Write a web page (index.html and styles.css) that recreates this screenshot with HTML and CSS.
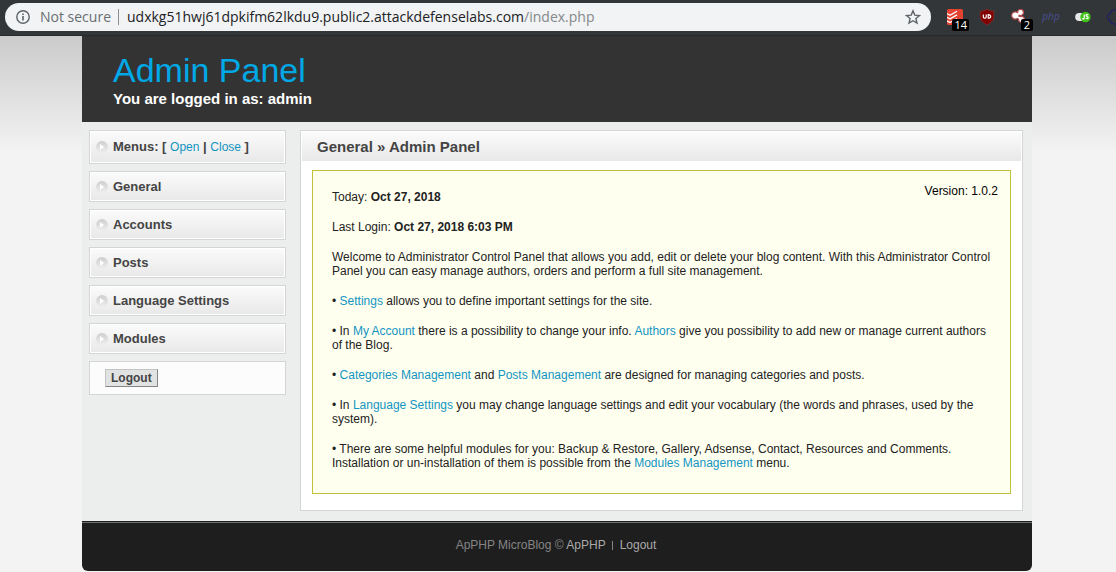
FILE: index.html
```html
<!DOCTYPE html>
<html lang="en">
<head>
<meta charset="utf-8">
<title>Admin Panel</title>
<link rel="stylesheet" href="styles.css">
</head>
<body>
<div class="toolbar">
  <div class="omnibox">
    <svg class="info" viewBox="0 0 14 14" width="14" height="14" aria-hidden="true"><circle cx="7" cy="7" r="6.2" fill="none" stroke="#5f6368" stroke-width="1.4"/><path d="M6.2 3.4h1.6V5H6.2zM6.2 6.1h1.6v4.5H6.2z" fill="#5f6368"/></svg>
    <span class="security">Not secure</span>
    <span class="address">udxkg51hwj61dpkifm62lkdu9.public2.attackdefenselabs.com<span class="path">/index.php</span></span>
    <svg class="star" viewBox="0 0 16 16" width="16" height="16" aria-hidden="true"><path d="M8 1.8l1.8 4.3 4.7.4-3.6 3 1.1 4.6L8 11.7l-4 2.4 1.1-4.6-3.6-3 4.7-.4z" fill="none" stroke="#5f6368" stroke-width="1.4"/></svg>
  </div>
  <div class="extensions">
    <span class="ext">
      <svg viewBox="0 0 16 16" width="16" height="16" aria-hidden="true"><rect width="16" height="16" rx="1.5" fill="#e44332"/><path d="M0 4.5l3 1.7 7-4M0 8.2l3 1.7 7-4M0 11.9l3 1.7 7-4" fill="none" stroke="#fff" stroke-width="1.3"/></svg>
      <span class="badge">14</span>
    </span>
    <span class="ext">
      <svg viewBox="0 0 16 16" width="16" height="16" aria-hidden="true"><path d="M8 .3c2 1.400 4.300 1.900 6.700 2v5.500c0 3.800-3 6-6.700 7.900-3.700-1.900-6.700-4.100-6.700-7.900V2.300C3.700 2.200 6 1.700 8 .3z" fill="#800000" stroke="#a33" stroke-width=".5"/><path d="M4.300 5.500v2.300c0 1.900 2.900 1.900 2.900 0V5.500M9.200 5.600v3.600c3.300.2 3.300-3.600 0-3.600z" fill="none" stroke="#fff" stroke-width="1.2"/></svg>
    </span>
    <span class="ext">
      <svg viewBox="0 0 16 16" width="16" height="16" aria-hidden="true"><g fill="#fff" stroke="#b94a4a" stroke-width="1.200"><circle cx="9.500" cy="3.500" r="3"/><circle cx="4.300" cy="6.500" r="3.600"/><circle cx="10.500" cy="10.500" r="3"/></g><path d="M6 6l3-2M7 8l3 2" stroke="#fff" stroke-width="2"/></svg>
      <span class="badge">2</span>
    </span>
    <span class="ext php">php</span>
    <span class="ext">
      <svg viewBox="0 0 16 16" width="16" height="16" aria-hidden="true"><rect x=".2" y="4" width="13" height="8" rx="4" fill="#e8e8e8"/><circle cx="10.500" cy="8" r="5.200" fill="#3fc218"/><path d="M9.200 5.500v3.600c0 1.300-1.800 1.200-1.800.2M13.300 6.100c-.8-.8-2.400-.5-2.200.6.200 1.100 2.200.7 2.200 1.900 0 1.300-1.800 1.400-2.500.5" fill="none" stroke="#fff" stroke-width="1.200"/></svg>
    </span>
    <span class="ext">
      <svg viewBox="0 0 16 16" width="16" height="16" aria-hidden="true"><path d="M4.500 1.500h3V.5h3v1h4v13h-4v1h-3v-1h-3v-2h-2V10h-2V6h2V3.500h2z" fill="none" stroke="#20235e" stroke-width="1.200"/></svg>
    </span>
  </div>
</div>
<div class="page">
  <div class="wrapper">
    <header class="header">
      <h1>Admin Panel</h1>
      <p>You are logged in as: admin</p>
    </header>
    <div class="columns">
      <nav class="sidebar">
        <div class="menu tall"><i class="bullet"></i><span>Menus: [ <a href="#open">Open</a> | <a href="#close">Close</a> ]</span></div>
        <div class="menu"><i class="bullet"></i><span>General</span></div>
        <div class="menu"><i class="bullet"></i><span>Accounts</span></div>
        <div class="menu"><i class="bullet"></i><span>Posts</span></div>
        <div class="menu"><i class="bullet"></i><span>Language Settings</span></div>
        <div class="menu"><i class="bullet"></i><span>Modules</span></div>
        <form class="logout"><button type="button">Logout</button></form>
      </nav>
      <main class="content">
        <h2>General » Admin Panel</h2>
        <div class="notice">
          <div class="version">Version: 1.0.2</div>
          <p class="today">Today: <b>Oct 27, 2018</b></p>
          <p>Last Login: <b>Oct 27, 2018 6:03 PM</b></p>
          <p>Welcome to Administrator Control Panel that allows you add, edit or delete your blog content. With this Administrator Control Panel you can easy manage authors, orders and perform a full site management.</p>
          <p>• <a href="#settings">Settings</a> allows you to define important settings for the site.</p>
          <p>• In <a href="#account">My Account</a> there is a possibility to change your info. <a href="#authors">Authors</a> give you possibility to add new or manage current authors of the Blog.</p>
          <p>• <a href="#categories">Categories Management</a> and <a href="#posts">Posts Management</a> are designed for managing categories and posts.</p>
          <p>• In <a href="#language">Language Settings</a> you may change language settings and edit your vocabulary (the words and phrases, used by the system).</p>
          <p>• There are some helpful modules for you: Backup &amp; Restore, Gallery, Adsense, Contact, Resources and Comments. Installation or un-installation of them is possible from the <a href="#modules">Modules Management</a> menu.</p>
        </div>
      </main>
    </div>
    <footer class="footer">
      <span>ApPHP MicroBlog © <a href="#apphp">ApPHP</a></span>
      <a class="exit" href="#logout">Logout</a>
    </footer>
  </div>
</div>
</body>
</html>
```

FILE: styles.css
```css
* { box-sizing: border-box; }
body {
  margin: 0;
  background: #f3f3f3;
  color: #222;
  font: 12px/14px "Liberation Sans", Arial, sans-serif;
  overflow-x: hidden;
}
a { color: #1295c2; text-decoration: none; }
h1, h2, p { margin: 0; }

.toolbar {
  display: flex;
  align-items: flex-start;
  height: 36px;
  padding: 3px 0 0 5px;
  background: #323639;
  border-bottom: 1px solid #28292a;
  overflow: hidden;
  font-family: "Open Sans", "Noto Sans", sans-serif;
}
.omnibox {
  flex: 1;
  display: flex;
  align-items: center;
  height: 28px;
  padding: 0 10px 0 11px;
  border-radius: 14px;
  background: #f1f3f4;
  font-size: 14px;
  line-height: 20px;
  white-space: nowrap;
}
.security {
  margin-left: 10px;
  padding-right: 7px;
  line-height: 16px;
  color: #6a6e72;
  border-right: 1px solid #8d9093;
}
.address { flex: 1; margin-left: 8px; color: #202124; }
.path { color: #85888b; }
.extensions { display: flex; flex: none; gap: 16px; width: 185px; padding: 6px 0 0 16px; }
.ext { position: relative; flex: none; width: 16px; height: 16px; }
.ext svg { display: block; }
.badge {
  position: absolute;
  right: -6px;
  top: 10px;
  min-width: 12px;
  padding: 0 2px;
  border-radius: 2px;
  background: #000;
  color: #fff;
  font-size: 11px;
  line-height: 12px;
  text-align: center;
}
.php {
  display: flex;
  justify-content: center;
  color: #4b5090;
  font-size: 10px;
  line-height: 14px;
  font-style: italic;
}

.page {
  display: flex;
  justify-content: center;
  padding: 0 84px 1px 82px;
  background: linear-gradient(#cbcbcb, #f3f3f3 116px);
}
.wrapper { flex: 1; max-width: 950px; }
.header { padding: 14px 31px; background: #333; color: #fff; }
.header h1 { color: #00a8e6; font-size: 34px; line-height: 40px; font-weight: normal; }
.header p { font-size: 15px; line-height: 18px; font-weight: bold; }

.columns {
  display: flex;
  gap: 14px;
  padding: 8px 9px 10px 7px;
  background: #ebeeed;
}
.sidebar { flex: none; display: flex; flex-direction: column; gap: 7px; width: 197px; }
.menu {
  display: flex;
  align-items: center;
  gap: 5px;
  height: 31px;
  padding: 0 6px;
  border: 1px solid #d3d6d5;
  box-shadow: inset 0 0 0 1px #fff;
  background: linear-gradient(#fbfbfb, #e8e8e8);
  color: #444;
  font-size: 13px;
  font-weight: bold;
}
.menu.tall { height: 34px; }
.menu a { font-size: 12px; font-weight: normal; }
.bullet {
  display: flex;
  justify-content: center;
  align-items: center;
  width: 12px;
  height: 12px;
  border-radius: 50%;
  background: linear-gradient(#cecece, #eee);
}
.bullet::after {
  content: "";
  border: 3px solid transparent;
  border-left: 4px solid #fff;
  border-right: 0;
}
.logout { height: 34px; padding: 7px 15px; border: 1px solid #d3d6d5; background: #fcfcfc; }
.logout button {
  display: block;
  height: 18px;
  padding: 0 5px;
  border: 1px solid;
  border-color: #c4c4c4 #858585 #858585 #c4c4c4;
  background: #e1e3e3;
  color: #444;
  font: bold 12px/16px "Liberation Sans", Arial, sans-serif;
}

.content { flex: 1; padding: 1px 1px 16px; border: 1px solid #d3d6d5; background: #fff; }
.content h2 {
  padding: 6px 15px;
  background: linear-gradient(#fbfbfb, #e8e8e8);
  color: #444;
  font-size: 15px;
  line-height: 17px;
}
.notice {
  margin: 9px 10px 0;
  padding: 13px 12px 23px 19px;
  border: 1px solid #bfbf38;
  background: #fffff0;
}
.notice p { margin-top: 16px; }
.notice .today { margin-top: 6px; }
.version { float: right; color: #000; }

.footer {
  display: flex;
  justify-content: center;
  height: 50px;
  padding: 16px 2px 0 0;
  border-top: 1px solid #1d1d1d;
  border-radius: 0 0 6px 6px;
  box-shadow: inset 0 1px #6a706d;
  background: #1e1e1e;
  color: #858585;
}
.footer a { color: #aaa; }
.footer .exit { display: flex; align-items: center; height: 14px; }
.footer .exit::before { content: ""; width: 1px; height: 9px; margin: 0 7px 0 6px; background: #858585; }
```
